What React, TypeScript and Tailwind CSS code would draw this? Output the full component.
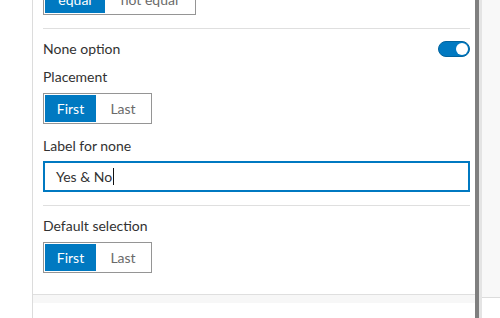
import React from "react";

const Segmented = ({
  options,
  widths,
  selected,
}: {
  options: string[];
  widths: string[];
  selected: number;
}) => (
  <div className="flex h-[31px] w-fit border border-[#959595] bg-white p-px">
    {options.map((option, i) => (
      <div
        key={option}
        className={
          "flex h-full items-center justify-center text-[14px] " +
          widths[i] +
          (i === selected ? " bg-[#0079c1] text-white" : " bg-white text-[#6a6a6a]")
        }
      >
        {option}
      </div>
    ))}
  </div>
);

const Label = ({ children }: { children: React.ReactNode }) => (
  <p className="h-[20px] text-[14px] leading-[20px] text-[#323232]">{children}</p>
);

const Toggle = () => (
  <div className="flex h-[16px] w-[32px] items-center justify-end rounded-full border border-[#00639e] bg-[#0079c1] pr-px">
    <div className="h-[12px] w-[12px] rounded-full bg-white" />
  </div>
);

export default function App() {
  return (
    <div className="flex h-[318px] w-[500px] overflow-hidden bg-white font-['Lato',sans-serif]">
      <div className="w-[33px] shrink-0 border-r border-[#dcdcdc] bg-white" />

      <div className="flex w-[442px] shrink-0 flex-col">
        <div className="-mt-[16px] flex flex-col pl-[10px] pr-[5px]">
          <Segmented
            options={["equal", "not equal"]}
            widths={["w-[60px]", "w-[89px]"]}
            selected={0}
          />
          <div className="mt-[13px] border-t border-[#dfdfdf]" />

          <div className="mt-[10px] flex items-center justify-between">
            <Label>None option</Label>
            <Toggle />
          </div>

          <div className="mt-[8px]">
            <Label>Placement</Label>
          </div>
          <div className="mt-[6px]">
            <Segmented
              options={["First", "Last"]}
              widths={["w-[51px]", "w-[54px]"]}
              selected={0}
            />
          </div>

          <div className="mt-[12px]">
            <Label>Label for none</Label>
          </div>
          <div className="mt-[5px] flex h-[31px] items-center border-2 border-[#0079c1] pl-[11px] text-[14px] text-[#323232]">
            <span>Yes &amp; No</span>
            <span className="ml-px h-[17px] w-px bg-[#111]" />
          </div>

          <div className="mt-[13px] border-t border-[#dfdfdf]" />

          <div className="mt-[10px]">
            <Label>Default selection</Label>
          </div>
          <div className="mt-[6px]">
            <Segmented
              options={["First", "Last"]}
              widths={["w-[51px]", "w-[54px]"]}
              selected={0}
            />
          </div>
        </div>

        <div className="mt-[21px] h-[9px] border-t border-[#dfdfdf] bg-[#f7f7f7]" />
        <div className="flex-1 bg-white" />
      </div>

      <div className="w-[4px] shrink-0 bg-[#7f7f7f]" />
      <div className="w-[3px] shrink-0 bg-[#e4e4e4]" />

      <div className="flex flex-1 flex-col">
        <div className="h-[298px] border-b border-[#dcdcdc] bg-[#f8f8f8]" />
        <div className="flex-1 bg-white" />
      </div>
    </div>
  );
}
